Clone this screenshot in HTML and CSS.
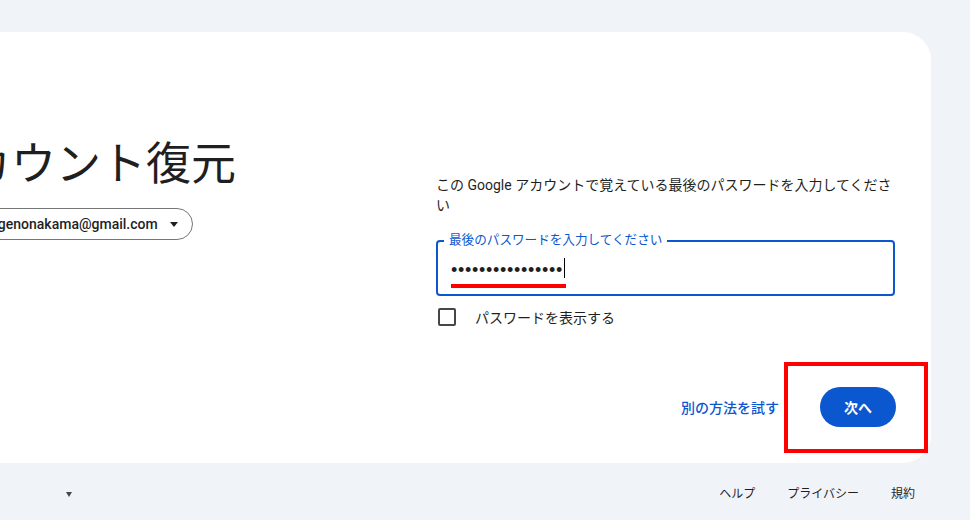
FILE: index.html
```html
<!DOCTYPE html>
<html lang="ja">
<head>
    <meta charset="UTF-8">
    <title>アカウント復元</title>
    <link rel="stylesheet" href="styles.css">
</head>
<body>
    <div class="card">
        <div class="card-left">
            <h1 class="title">アカウント復元</h1>
            <div class="account-chip">
                <span class="avatar"></span>
                <span class="chip-email">kagenonakama@gmail.com</span>
                <span class="chip-arrow"></span>
            </div>
        </div>

        <div class="card-right">
            <p class="desc">この Google アカウントで覚えている最後のパスワードを入力してください</p>

            <div class="field">
                <span class="field-label">最後のパスワードを入力してください</span>
                <span class="dots">••••••••••••••••</span><span class="caret"></span>
                <span class="mark-line"></span>
            </div>

            <label class="show-pass">
                <span class="checkbox"></span>
                <span>パスワードを表示する</span>
            </label>

            <div class="actions">
                <a class="text-btn" href="#">別の方法を試す</a>
                <button class="next-btn">次へ</button>
            </div>
        </div>
    </div>

    <div class="footer">
        <div class="lang">
            <span class="lang-name">日本語</span>
            <span class="lang-arrow"></span>
        </div>
        <div class="footer-links">
            <a href="#">ヘルプ</a>
            <a href="#">プライバシー</a>
            <a href="#">規約</a>
        </div>
    </div>

    <!-- 注目枠 -->
    <div class="mark-box"></div>
</body>
</html>
```

FILE: styles.css
```css
body {
    margin: 0;
    padding: 0;
    width: 970px;
    height: 520px;
    overflow: hidden;
    position: relative;
    background-color: #f0f4f9;
    color: #1f1f1f;
    font-family: Roboto, "Noto Sans CJK JP", sans-serif;
}

.card {
    margin: 32px 39px 0 -113px;
    height: 431px;
    box-sizing: border-box;
    padding: 0 36px;
    background-color: #fff;
    border-radius: 28px;
    display: grid;
    grid-template-columns: 1fr 459px;
}

.card-left {
    padding-top: 107px;
}

.title {
    margin: 0 0 0 -2px;
    font-size: 45px;
    font-weight: 400;
    line-height: 52px;
}

.account-chip {
    margin-top: 17px;
    display: inline-flex;
    align-items: center;
    height: 32px;
    box-sizing: border-box;
    border: 1px solid #747775;
    border-radius: 16px;
    padding: 0 14px 0 31px;
}

.avatar {
    width: 20px;
    height: 20px;
    border-radius: 50%;
    background-color: #7b5ea7;
    margin-right: 8px;
}

.chip-email {
    font-size: 14px;
    font-weight: 500;
    line-height: 20px;
}

.chip-arrow {
    margin-left: 12px;
    border-left: 4px solid transparent;
    border-right: 4px solid transparent;
    border-top: 5px solid #1f1f1f;
}

.card-right {
    padding-top: 143px;
}

.desc {
    margin: 0;
    font-size: 14px;
    line-height: 20px;
}

.field {
    position: relative;
    margin-top: 25px;
    height: 56px;
    box-sizing: border-box;
    border: 2px solid #0b57d0;
    border-radius: 4px;
    padding-left: 13px;
    display: flex;
    align-items: center;
}

.field-label {
    position: absolute;
    top: -10px;
    left: 6px;
    padding: 0 5px;
    background-color: #fff;
    color: #0b57d0;
    font-size: 12.6px;
    line-height: 16px;
}

.dots {
    font-family: "Liberation Sans", sans-serif;
    font-size: 18px;
    letter-spacing: 0.7px;
    line-height: 20px;
    margin-top: 3px;
}

.caret {
    width: 1px;
    height: 20px;
    background-color: #000;
    margin-left: 1px;
}

.mark-line {
    position: absolute;
    left: 13px;
    top: 42px;
    width: 115px;
    height: 4px;
    background-color: #ff0000;
}

.show-pass {
    margin-top: 9px;
    height: 24px;
    display: flex;
    align-items: center;
    font-size: 14px;
}

.checkbox {
    width: 18px;
    height: 18px;
    box-sizing: border-box;
    border: 2px solid #444746;
    border-radius: 2px;
    margin: 0 19px 0 2px;
}

.actions {
    margin-top: 58px;
    display: flex;
    justify-content: flex-end;
    align-items: center;
}

.text-btn {
    color: #0b57d0;
    font-size: 14px;
    font-weight: 500;
    text-decoration: none;
    margin-right: 41px;
}

.next-btn {
    height: 40px;
    padding: 0 24px;
    border: none;
    border-radius: 20px;
    background-color: #0b57d0;
    color: #fff;
    font-family: inherit;
    font-size: 14px;
    font-weight: 700;
    margin-right: -1px;
}

.footer {
    margin: 0 39px 0 -113px;
    padding-top: 23px;
    display: flex;
    justify-content: space-between;
    font-size: 12px;
    line-height: 16px;
}

.lang {
    width: 198px;
    box-sizing: border-box;
    padding: 0 13px 0 16px;
    display: flex;
    justify-content: space-between;
    align-items: center;
}

.lang-arrow {
    border-left: 3.5px solid transparent;
    border-right: 3.5px solid transparent;
    border-top: 5px solid #444746;
}

.footer-links {
    display: flex;
}

.footer-links a {
    color: #1f1f1f;
    text-decoration: none;
    padding: 0 16px;
}

.mark-box {
    position: absolute;
    left: 784px;
    top: 362px;
    width: 144px;
    height: 91px;
    box-sizing: border-box;
    border: 4px solid #ff0000;
}
```
